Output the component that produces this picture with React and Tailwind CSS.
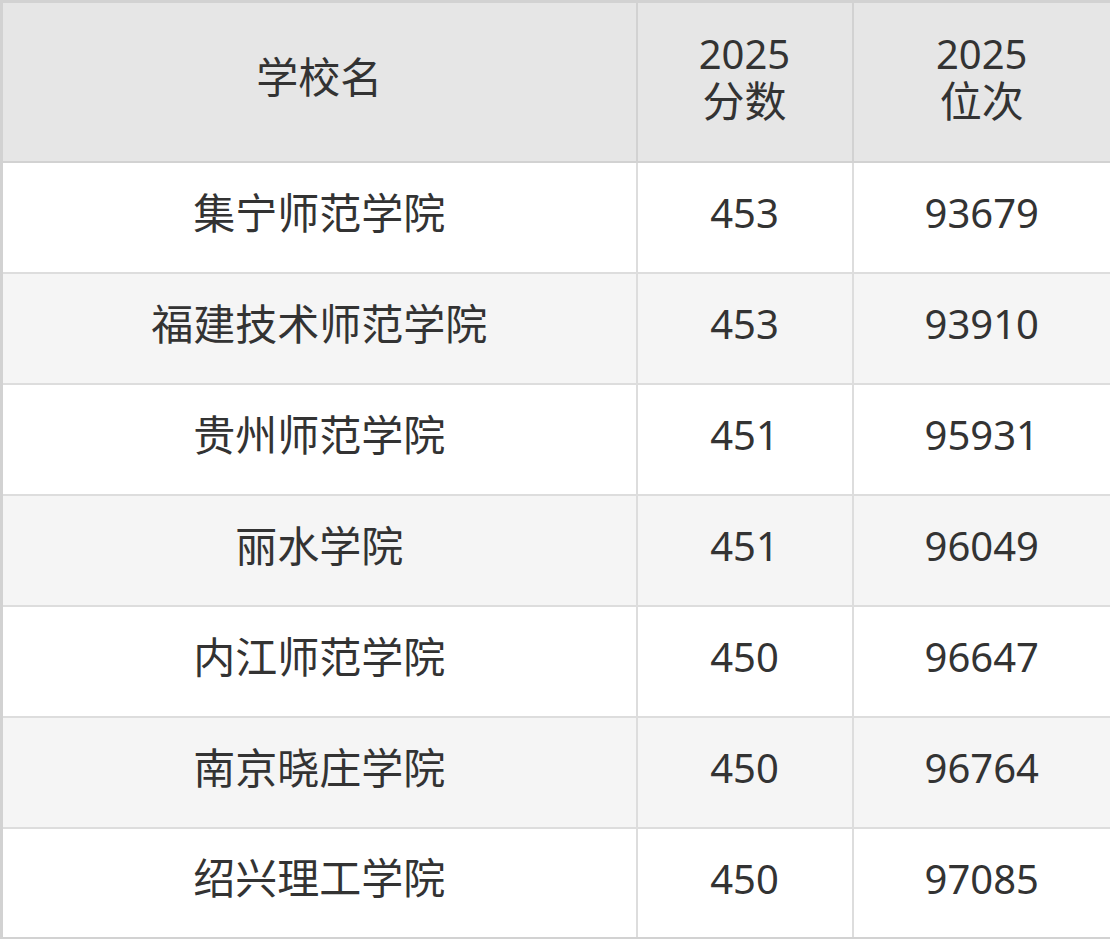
const rows = [
  ["集宁师范学院", "453", "93679"],
  ["福建技术师范学院", "453", "93910"],
  ["贵州师范学院", "451", "95931"],
  ["丽水学院", "451", "96049"],
  ["内江师范学院", "450", "96647"],
  ["南京晓庄学院", "450", "96764"],
  ["绍兴理工学院", "450", "97085"],
];

export default function App() {
  return (
    <div className="w-[1110px] h-[939px] bg-white font-['Noto_Sans','Noto_Sans_CJK_SC',sans-serif] text-[#333]">
      <table className="w-[1110px] table-fixed border-collapse border-[3px] border-[#d2d2d2] text-[40px] leading-[47px]">
        <colgroup>
          <col className="w-[635px]" />
          <col className="w-[216px]" />
          <col className="w-[259px]" />
        </colgroup>
        <thead>
          <tr className="h-[160px] bg-[#e6e6e6]">
            <th className="border-2 border-[#d2d2d2] font-normal pb-[9px]">
              <span className="text-[42px]">学校名</span>
            </th>
            <th className="border-2 border-[#d2d2d2] font-normal pb-[9px]">
              2025<br /><span className="text-[42px]">分数</span>
            </th>
            <th className="border-2 border-[#d2d2d2] font-normal pb-[9px]">
              2025<br /><span className="text-[42px]">位次</span>
            </th>
          </tr>
        </thead>
        <tbody>
          {rows.map((r, i) => (
            <tr key={r[0]} className={i % 2 === 0 ? "h-[111px] bg-white" : "h-[111px] bg-[#f5f5f5]"}>
              <td className="border-2 border-[#dddddd] text-center pb-[9px]">
                <span className="text-[42px]">{r[0]}</span>
              </td>
              <td className="border-2 border-[#dddddd] text-center pb-[9px]">{r[1]}</td>
              <td className="border-2 border-[#dddddd] text-center pb-[9px]">{r[2]}</td>
            </tr>
          ))}
        </tbody>
      </table>
    </div>
  );
}
